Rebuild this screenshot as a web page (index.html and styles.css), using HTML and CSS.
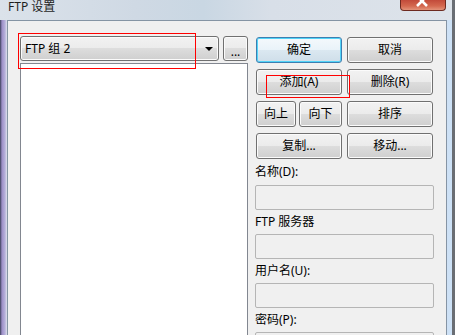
FILE: index.html
```html
<!DOCTYPE html>
<html lang="zh-CN">
<head>
    <meta charset="UTF-8">
    <meta name="viewport" content="width=device-width, initial-scale=1.0">
    <title>FTP 设置</title>
    <link rel="stylesheet" href="styles.css">
</head>
<body>

    <div class="frame">
        <!-- Judul jendela -->
        <div class="titlebar">
            <span class="title">FTP 设置</span>
            <span class="close">
                <svg width="46" height="11" viewBox="0 0 46 11">
                    <path d="M17 -3 L22 2 L27 -3 M17 7 L22 2 L27 7" stroke="#fff" stroke-width="2.6" fill="none"/>
                </svg>
            </span>
        </div>

        <div class="client">
            <div class="left">
                <div class="combo-row">
                    <div class="combo">
                        <span>FTP 组 2</span>
                        <span class="arrow"></span>
                    </div>
                    <button class="btn dots">...</button>
                </div>
                <div class="list"></div>
            </div>

            <div class="right">
                <div class="btn-grid">
                    <button class="btn default">确定</button>
                    <button class="btn">取消</button>
                    <button class="btn">添加(A)</button>
                    <button class="btn">删除(R)</button>
                    <div class="pair">
                        <button class="btn">向上</button>
                        <button class="btn">向下</button>
                    </div>
                    <button class="btn">排序</button>
                    <button class="btn">复制...</button>
                    <button class="btn">移动...</button>
                </div>

                <div class="field-label first">名称(D):</div>
                <div class="field"></div>
                <div class="field-label">FTP 服务器</div>
                <div class="field"></div>
                <div class="field-label">用户名(U):</div>
                <div class="field"></div>
                <div class="field-label">密码(P):</div>
                <div class="field"></div>
            </div>
        </div>
    </div>

    <!-- Kotak merah penanda -->
    <div class="mark mark-group"></div>
    <div class="mark mark-add"></div>

</body>
</html>
```

FILE: styles.css
```css
body {
    margin: 0;
    width: 459px;
    height: 335px;
    overflow: hidden;
    background-color: #fff;
    font-family: 'Noto Sans', 'Noto Sans CJK SC', sans-serif;
    font-size: 12px;
    color: #000;
    position: relative;
}
.frame {
    width: 452px;
    height: 335px;
    border-right: 3px solid #6a6e74;
    display: flex;
    flex-direction: column;
    background: linear-gradient(90deg, #3b3f5a 0px, #9d8fc8 2px, #b7b0db 5px, #dfe3ee 7px, #d3dde9 40%, #cfdcea 90%, #cde1f6 100%);
}
.titlebar {
    height: 20px;
    flex-shrink: 0; /* jangan mengecil */
    display: flex;
    justify-content: space-between;
    align-items: flex-start;
    padding: 0 6px 0 8px;
    background: linear-gradient(90deg, #dbe2ea 0%, #cfd9e4 30%, #c9d7e3 45%, #d8dfe8 60%, #dde3ea 100%);
}
.title {
    line-height: 13px;
    font-size: 12px;
    color: #1e1e1e;
}
.close {
    width: 46px;
    height: 11px;
    box-sizing: border-box;
    border: 1px solid #6d2a20;
    border-top: none;
    border-radius: 0 0 4px 4px;
    background: linear-gradient(#c24a3a, #d4684f 60%, #e3937a);
    overflow: hidden;
    display: block;
}
.close svg {
    display: block;
    margin: -1px 0 0 -1px;
}
.client {
    flex: 1;
    min-height: 0;
    overflow: hidden;
    margin-left: 7px;
    width: 440px;
    box-sizing: border-box;
    border: 1px solid #8594a4;
    border-bottom: none; /* jendela terpotong di bawah */
    background-color: #f0f0f0;
    padding: 15px 0 0 12px;
    display: flex;
    gap: 7px;
}
.left {
    width: 228px;
    display: flex;
    flex-direction: column;
}
.combo-row {
    display: flex;
    gap: 4px;
    height: 25px;
    flex-shrink: 0;
}
.combo {
    flex: 1;
    box-sizing: border-box;
    border: 1px solid #707070;
    border-radius: 3px;
    background: linear-gradient(#f2f2f2 0%, #ebebeb 50%, #dddddd 50%, #cfcfcf 100%);
    box-shadow: inset 0 0 0 1px #fbfbfb;
    display: flex;
    align-items: center;
    justify-content: space-between;
    padding: 0 4px 0 4px;
    line-height: 14px;
}
.arrow {
    width: 0;
    height: 0;
    border-left: 4px solid transparent;
    border-right: 4px solid transparent;
    border-top: 4px solid #000;
    margin-right: 1px;
}
.list {
    flex: 1;
    margin-top: 2px;
    background-color: #fff;
    border: 1px solid #828790;
    border-bottom: none;
}
.right {
    width: 179px;
    display: flex;
    flex-direction: column;
    flex-shrink: 0;
}
.btn-grid {
    display: grid;
    grid-template-columns: 86px 86px;
    grid-auto-rows: 26px;
    gap: 6px 5px;
    margin: 1px 1px 0;
}
.pair {
    display: grid;
    grid-template-columns: 40px 43px;
    gap: 3px;
}
.btn {
    box-sizing: border-box;
    height: 26px;
    padding: 0;
    font-family: inherit;
    font-size: 12px;
    line-height: 14px;
    color: #000;
    border: 1px solid #707070;
    border-radius: 3px;
    background: linear-gradient(#f2f2f2 0%, #ebebeb 50%, #dddddd 50%, #cfcfcf 100%);
    box-shadow: inset 0 0 0 1px #fbfbfb;
}
.btn.default {
    border-color: #3c7fb1;
    background: linear-gradient(#f4f9fc 0%, #e9f3f9 50%, #dbe8f1 50%, #cfdee9 100%);
    box-shadow: inset 0 0 0 1px #52d4f8;
}
.btn.dots {
    width: 25px;
    height: 25px;
    line-height: 10px;
    padding-top: 6px;
}
.field-label {
    height: 24px;
    line-height: 24px;
    flex-shrink: 0;
}
.field-label.first {
    height: 26px;
    line-height: 26px;
}
.field {
    height: 25px;
    flex-shrink: 0;
    box-sizing: border-box;
    border: 1px solid #b5b5b5;
    border-radius: 2px;
    background-color: #f0f0f0;
}
.mark {
    position: absolute;
    box-sizing: border-box;
    border: 1px solid #f00;
}
.mark-group {
    left: 18px;
    top: 33px;
    width: 178px;
    height: 36px;
}
.mark-add {
    left: 266px;
    top: 75px;
    width: 84px;
    height: 23px;
}
```
